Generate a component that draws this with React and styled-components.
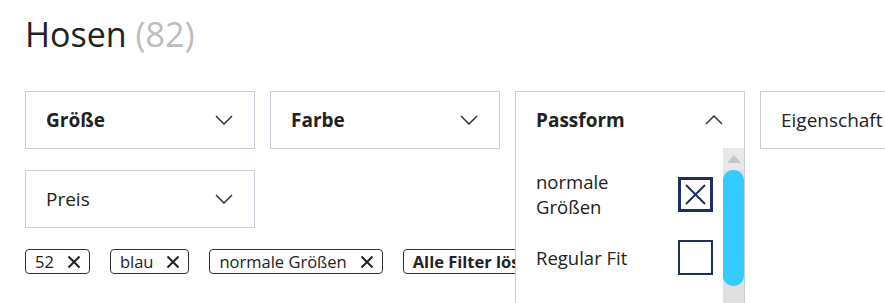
import React from 'react';
import styled, { createGlobalStyle } from 'styled-components';

const GlobalStyle = createGlobalStyle`
  html, body {
    height: 100%;
  }

  body {
    margin: 0;
    overflow: hidden;
    background: #fff;
    font-family: "Open Sans", "Noto Sans", sans-serif;
    color: #222;
  }
`;

const Page = styled.div`
  box-sizing: border-box;
  min-height: 100vh;
  padding: 12px 0 0 25px;
`;

const Title = styled.h1`
  margin: 0;
  font-size: 34px;
  font-weight: 400;
  line-height: 44px;
  color: #222;
`;

const Count = styled.span`
  color: #bdbdbd;
`;

const FilterGrid = styled.div`
  display: grid;
  grid-template-columns: repeat(4, 230px);
  column-gap: 15px;
  row-gap: 21px;
  margin-top: 35px;
`;

const FilterBox = styled.div`
  position: relative;
  box-sizing: border-box;
  height: 58px;
  display: flex;
  align-items: center;
  justify-content: space-between;
  padding: 0 21px 0 20px;
  border: 1px solid #c9cdd9;
  border-bottom-color: ${(p) => (p.$open ? 'transparent' : '#c9cdd9')};
  font-size: 19px;
  font-weight: ${(p) => (p.$active ? 700 : 400)};
  color: #222;
  white-space: nowrap;
`;

const Dropdown = styled.div`
  position: absolute;
  top: 100%;
  left: -1px;
  right: -1px;
  height: 170px;
  display: flex;
  background: #fff;
  border: 1px solid #c9cdd9;
  border-top: none;
  border-bottom: none;
  z-index: 2;
  font-weight: 400;
`;

const OptionList = styled.div`
  flex: 1;
  display: flex;
  flex-direction: column;
  gap: 21px;
  padding: 21px 10px 0 20px;
`;

const Option = styled.label`
  display: flex;
  align-items: center;
  justify-content: space-between;
`;

const OptionText = styled.span`
  max-width: 120px;
  font-size: 18.5px;
  line-height: 25px;
  color: #222;
  white-space: normal;
`;

const Checkbox = styled.span`
  box-sizing: border-box;
  width: 35px;
  height: 35px;
  flex-shrink: 0;
  display: flex;
  align-items: center;
  justify-content: center;
  border: ${(p) => (p.$checked ? 3 : 2)}px solid #1c2f5e;
  background: #fff;
`;

const Scrollbar = styled.div`
  width: 21px;
  display: flex;
  flex-direction: column;
  background: #e0e0e0;
`;

const ScrollArrow = styled.div`
  height: 22px;
  display: flex;
  align-items: center;
  justify-content: center;
  background: #e8e8e8;

  &::before {
    content: "";
    border-left: 7px solid transparent;
    border-right: 7px solid transparent;
    border-bottom: 8px solid #c6c6c6;
  }
`;

const ScrollThumb = styled.div`
  height: 116px;
  background: #33ccff;
  border-radius: 10px;
`;

const ChipRow = styled.div`
  display: flex;
  gap: 20px;
  margin-top: 21px;
`;

const Chip = styled.span`
  box-sizing: border-box;
  height: 25px;
  display: inline-flex;
  align-items: center;
  padding: ${(p) => (p.$clear ? '0 9px' : '0 8px 0 9px')};
  border: 1px solid #333;
  border-radius: 4px;
  font-size: 16.5px;
  font-weight: ${(p) => (p.$clear ? 700 : 400)};
  color: #222;
  white-space: nowrap;
`;

const ChipClose = styled.svg`
  margin-left: 13px;
`;

const Chevron = ({ up }) => (
  <svg width="18" height="10" viewBox="0 0 18 10">
    <polyline
      points={up ? '1,9 9,1 17,9' : '1,1 9,9 17,1'}
      fill="none"
      stroke="#333"
      strokeWidth="1.5"
    />
  </svg>
);

const CloseIcon = () => (
  <ChipClose width="14" height="14" viewBox="0 0 14 14">
    <path d="M1.5 1.5 L12.5 12.5 M12.5 1.5 L1.5 12.5" stroke="#222" strokeWidth="2" />
  </ChipClose>
);

const filters = [
  { label: 'Größe', active: true },
  { label: 'Farbe', active: true },
  { label: 'Passform', active: true, open: true },
  { label: 'Eigenschaft', active: false },
  { label: 'Preis', active: false },
];

const options = [
  { label: 'normale Größen', checked: true },
  { label: 'Regular Fit', checked: false },
];

const chips = ['52', 'blau', 'normale Größen'];

export default function App() {
  return (
    <>
      <GlobalStyle />
      <Page>
        <Title>
          Hosen <Count>(82)</Count>
        </Title>

        <FilterGrid>
          {filters.map((f) => (
            <FilterBox key={f.label} $active={f.active} $open={f.open}>
              {f.label}
              <Chevron up={f.open} />
              {f.open && (
                <Dropdown>
                  <OptionList>
                    {options.map((o) => (
                      <Option key={o.label}>
                        <OptionText>{o.label}</OptionText>
                        <Checkbox $checked={o.checked}>
                          {o.checked && (
                            <svg width="21" height="21" viewBox="0 0 21 21">
                              <path d="M1 1 L20 20 M20 1 L1 20" stroke="#1c2f5e" strokeWidth="2" />
                            </svg>
                          )}
                        </Checkbox>
                      </Option>
                    ))}
                  </OptionList>
                  <Scrollbar>
                    <ScrollArrow />
                    <ScrollThumb />
                  </Scrollbar>
                </Dropdown>
              )}
            </FilterBox>
          ))}
        </FilterGrid>

        <ChipRow>
          {chips.map((c) => (
            <Chip key={c}>
              {c}
              <CloseIcon />
            </Chip>
          ))}
          <Chip $clear>Alle Filter löschen</Chip>
        </ChipRow>
      </Page>
    </>
  );
}
